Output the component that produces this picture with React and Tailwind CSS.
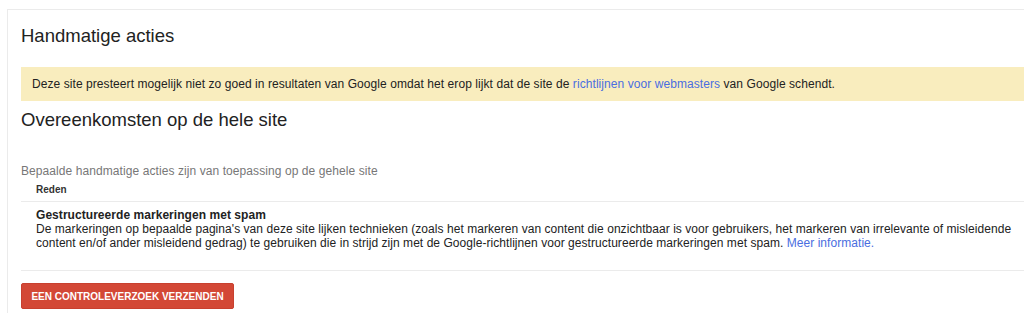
import React from "react";

const App = () => {
  return (
    <div
      className="w-[1024px] h-[327px] bg-white overflow-hidden pt-[9px] pl-[7px]"
      style={{ fontFamily: '"Liberation Sans", Arial, sans-serif' }}
    >
      <div className="border-t border-l border-[#ebebeb] pl-[13px] pb-[4px]">
        <h1 className="mt-[14px] text-[18.5px] leading-[24px] text-[#222]">
          Handmatige acties
        </h1>

        <div className="mt-[19px] bg-[#f9edbe] px-[11px] py-[9px] text-[12px] leading-[16px] tracking-[0.07px] text-[#222]">
          Deze site presteert mogelijk niet zo goed in resultaten van Google
          omdat het erop lijkt dat de site de{" "}
          <a href="#" className="text-[#4a6ee0]">
            richtlijnen voor webmasters
          </a>{" "}
          van Google schendt.
        </div>

        <h2 className="mt-[7px] text-[18.5px] leading-[24px] text-[#222]">
          Overeenkomsten op de hele site
        </h2>

        <p className="mt-[31px] text-[12px] leading-[16px] tracking-[0.08px] text-[#777]">
          Bepaalde handmatige acties zijn van toepassing op de gehele site
        </p>

        <div className="mt-[4px] px-[15px] pb-[4px] text-[10px] leading-[14px] font-bold text-[#333] border-b border-[#ebebeb]">
          Reden
        </div>

        <div className="pl-[15px] pt-[6px] pb-[20px] text-[12px] leading-[14px] tracking-[0.05px] text-[#222] border-b border-[#ebebeb]">
          <div className="font-bold">Gestructureerde markeringen met spam</div>
          <p>
            De markeringen op bepaalde pagina's van deze site lijken technieken
            (zoals het markeren van content die onzichtbaar is voor gebruikers,
            het markeren van irrelevante of misleidende content en/of ander
            misleidend gedrag) te gebruiken die in strijd zijn met de
            Google-richtlijnen voor gestructureerde markeringen met spam.{" "}
            <a href="#" className="text-[#4a6ee0]">
              Meer informatie.
            </a>
          </p>
        </div>

        <button
          type="button"
          className="mt-[12px] w-[213px] h-[26px] rounded-[2px] bg-[#d34836] border border-[#c8402f] text-white text-[10px] font-bold uppercase flex items-center justify-center"
        >
          Een controleverzoek verzenden
        </button>
      </div>
    </div>
  );
};

export default App;
